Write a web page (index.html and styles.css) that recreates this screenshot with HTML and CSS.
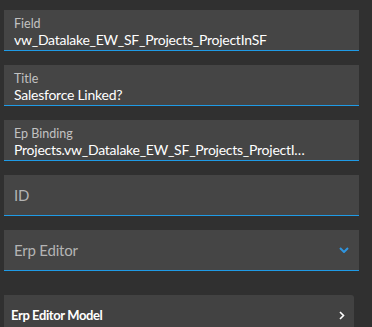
FILE: index.html
```html
<!DOCTYPE html>
<html>
<head>
<meta charset="utf-8">
<link rel="stylesheet" href="styles.css">
</head>
<body>
<div class="panel">
  <div class="field">
    <div class="label">Field</div>
    <div class="value">vw_Datalake_EW_SF_Projects_ProjectInSF</div>
  </div>
  <div class="field">
    <div class="label">Title</div>
    <div class="value">Salesforce Linked?</div>
  </div>
  <div class="field">
    <div class="label">Ep Binding</div>
    <div class="value">Projects.vw_Datalake_EW_SF_Projects_ProjectInSF</div>
  </div>
  <div class="field field-empty">
    <div class="placeholder">ID</div>
  </div>
  <div class="field field-empty field-select">
    <div class="placeholder">Erp Editor</div>
    <svg class="chev-down" width="10" height="6" viewBox="0 0 10 6"><path d="M1 1 L5 5 L9 1" fill="none" stroke="#2f95e0" stroke-width="2"/></svg>
  </div>
  <div class="card">
    <div class="card-title">Erp Editor Model</div>
    <svg class="chev-right" width="6" height="9" viewBox="0 0 6 9"><path d="M1 1 L4.5 4.5 L1 8" fill="none" stroke="#ffffff" stroke-width="1.6"/></svg>
  </div>
</div>
</body>
</html>
```

FILE: styles.css
```css
html, body {
  margin: 0;
  padding: 0;
  background: #303030;
  height: 100%;
  overflow: hidden;
}
.panel {
  display: flex;
  flex-direction: column;
  gap: 14px;
  padding: 10px 13px 0 4px;
  font-family: Lato, "Noto Sans", sans-serif;
}
.field {
  height: 40px;
  background: #454545;
  border-bottom: 1px solid #1f9be6;
  padding: 0 10px;
  display: flex;
  flex-direction: column;
  justify-content: flex-start;
  box-sizing: content-box;
}
.label {
  font-size: 12.5px;
  line-height: 14px;
  margin-top: 7px;
  color: #c2c2c2;
}
.value {
  font-size: 14px;
  line-height: 17px;
  letter-spacing: -0.25px;
  color: #ffffff;
  white-space: nowrap;
  overflow: hidden;
  text-overflow: ellipsis;
  margin-right: 40px;
}
.field-empty {
  flex-direction: row;
  align-items: center;
  justify-content: space-between;
}
.placeholder {
  font-size: 15px;
  letter-spacing: -0.2px;
  color: #b4b4b4;
}
.card {
  margin-top: 10px;
  margin-right: 5px;
  height: 40px;
  background: #424242;
  border-radius: 0 3px 0 0;
  display: flex;
  align-items: center;
  justify-content: space-between;
  padding: 0 9px 0 7px;
}
.card-title {
  font-size: 13px;
  font-weight: 700;
  letter-spacing: -0.4px;
  color: #ffffff;
}
```
